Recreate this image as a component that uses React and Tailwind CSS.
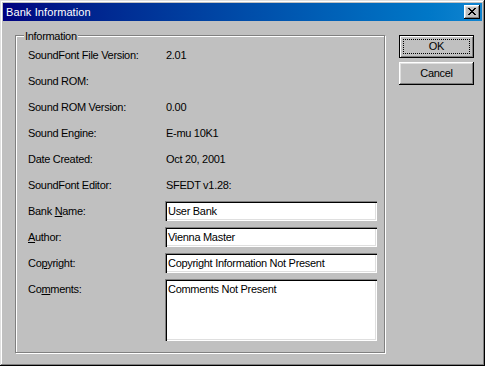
export default function App() {
  const labelRows = [
    ["SoundFont File Version:", "2.01"],
    ["Sound ROM:", ""],
    ["Sound ROM Version:", "0.00"],
    ["Sound Engine:", "E-mu 10K1"],
    ["Date Created:", "Oct 20, 2001"],
    ["SoundFont Editor:", "SFEDT v1.28:"],
  ];
  const inputRows = [
    [<>Bank <u>N</u>ame:</>, "User Bank"],
    [<><u>A</u>uthor:</>, "Vienna Master"],
    [<>Co<u>p</u>yright:</>, "Copyright Information Not Present"],
  ];
  const sunken =
    "bg-white shadow-[inset_1px_1px_0_#808080,inset_2px_2px_0_#000,inset_-1px_-1px_0_#fff,inset_-2px_-2px_0_#dfdfdf]";
  return (
    <div className="w-[485px] h-[366px] bg-[#c0c0c0] p-[3px] shadow-[inset_-1px_-1px_0_#000,inset_1px_1px_0_#dfdfdf,inset_-2px_-2px_0_#808080,inset_2px_2px_0_#fff] font-['Liberation_Sans',Arial,sans-serif] text-[11px] leading-[13px] tracking-[-0.3px] text-black flex flex-col">
      {/* Title bar */}
      <div className="h-[18px] flex items-center justify-between bg-linear-to-r from-[#000080] to-[#1084d0] pl-[3px] pr-[2px]">
        <span className="text-white text-[11px] tracking-[0.1px]">Bank Information</span>
        <div className="w-[16px] h-[14px] bg-[#c0c0c0] shadow-[inset_-1px_-1px_0_#000,inset_1px_1px_0_#fff,inset_-2px_-2px_0_#808080,inset_2px_2px_0_#dfdfdf] flex items-center justify-center">
          <svg width="8" height="7" viewBox="0 0 8 7" shapeRendering="crispEdges" className="ml-[-1px] mt-[-1px]">
            <path
              fill="#000"
              d="M0 0h2v1H0zM6 0h2v1H6zM1 1h2v1H1zM5 1h2v1H5zM2 2h4v1H2zM3 3h2v1H3zM2 4h4v1H2zM1 5h2v1H1zM5 5h2v1H5zM0 6h2v1H0zM6 6h2v1H6z"
            />
          </svg>
        </div>
      </div>

      {/* Client area */}
      <div className="flex flex-row pl-[12px] pt-[14px]">
        {/* Group box */}
        <div className="relative w-[370px] h-[318px] border border-[#808080] shadow-[1px_1px_0_#fff,inset_1px_1px_0_#fff] pt-[6px] pl-[12px]">
          <div className="absolute left-[8px] top-[-6px] px-[1px] bg-[#c0c0c0]">Information</div>
          {labelRows.map(([l, v]) => (
            <div key={l} className="h-[26px] flex items-center">
              <div className="w-[137px]">{l}</div>
              <div className="pl-[1px]">{v}</div>
            </div>
          ))}
          {inputRows.map(([l, v], i) => (
            <div key={i} className="h-[26px] flex items-center">
              <div className="w-[137px]">{l}</div>
              <div className={`w-[212px] h-[20px] flex items-center pl-[3px] ${sunken}`}>{v}</div>
            </div>
          ))}
          <div className="flex items-start">
            <div className="w-[137px] h-[26px] flex items-center">
              <span>
                Co<u>m</u>ments:
              </span>
            </div>
            <div className={`w-[212px] h-[62px] mt-[3px] pt-[4px] pl-[3px] ${sunken}`}>Comments Not Present</div>
          </div>
        </div>

        {/* Buttons */}
        <div className="ml-[14px] flex flex-col gap-[4px]">
          <div className="w-[75px] h-[23px] border border-black shadow-[inset_1px_1px_0_#fff,inset_-1px_-1px_0_#808080] p-[3px] flex">
            <div className="flex-1 border border-dotted border-black flex items-center justify-center">OK</div>
          </div>
          <div className="w-[75px] h-[23px] shadow-[inset_-1px_-1px_0_#000,inset_1px_1px_0_#fff,inset_-2px_-2px_0_#808080,inset_2px_2px_0_#dfdfdf] flex items-center justify-center">
            Cancel
          </div>
        </div>
      </div>
    </div>
  );
}
